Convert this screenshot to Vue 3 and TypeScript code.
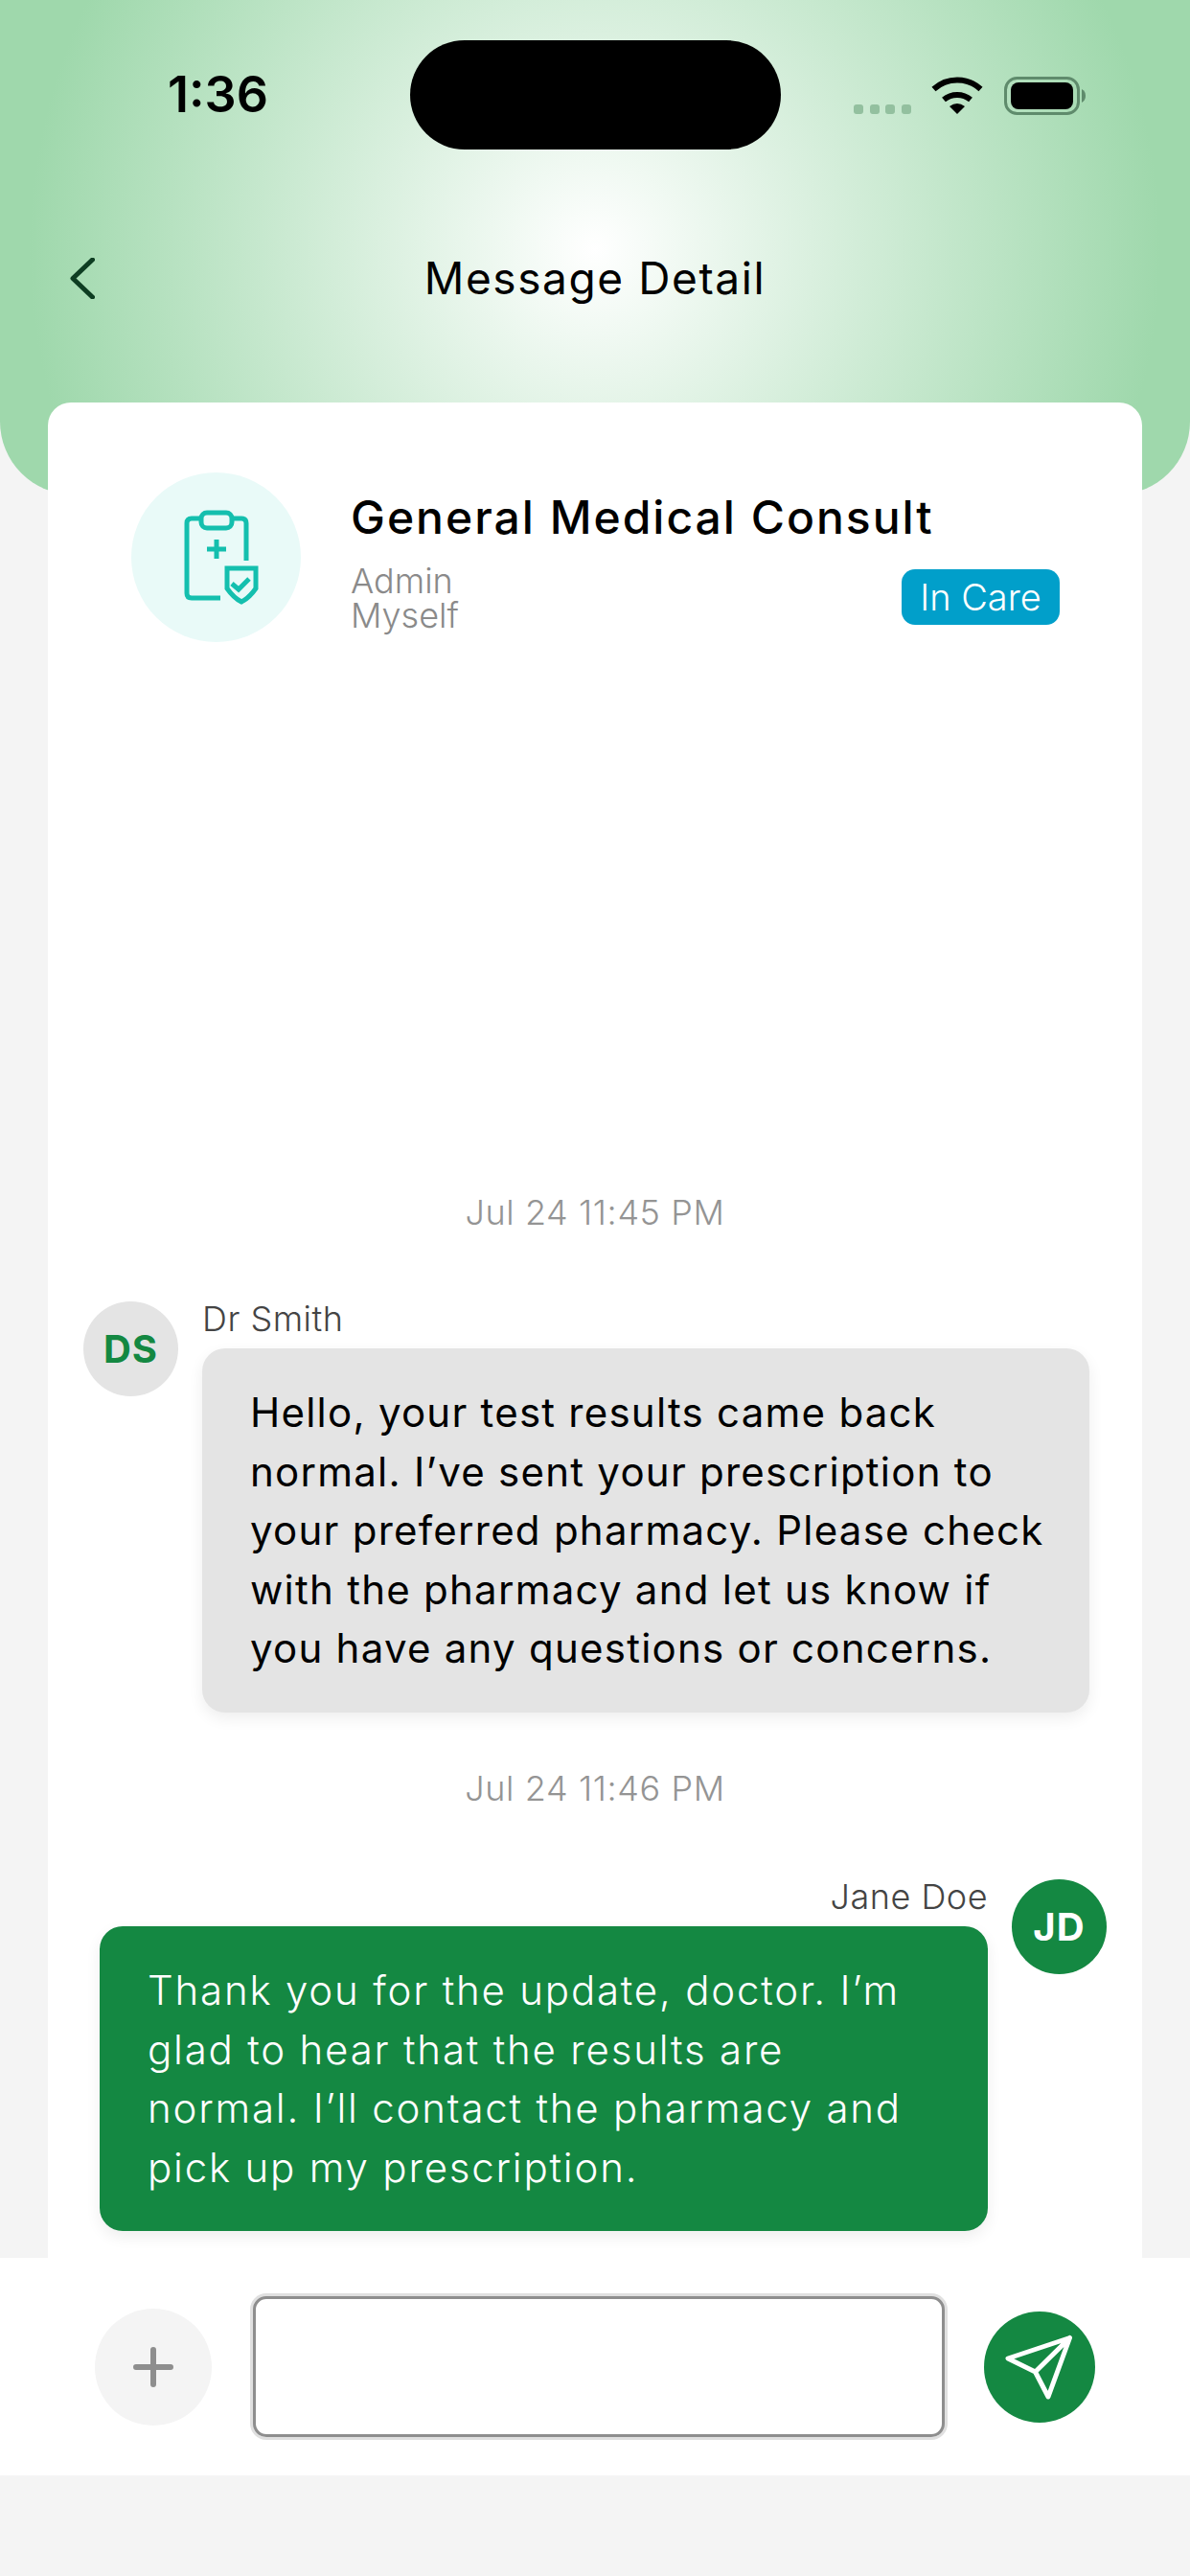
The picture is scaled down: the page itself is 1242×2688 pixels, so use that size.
<script setup lang="ts">
interface Thread {
  time: string
  sender: string
  initials: string
  mine: boolean
  text: string
}

const threads: Thread[] = [
  {
    time: 'Jul 24 11:45 PM',
    sender: 'Dr Smith',
    initials: 'DS',
    mine: false,
    text: "Hello, your test results came back normal. I’ve sent your prescription to your preferred pharmacy. Please check with the pharmacy and let us know if you have any questions or concerns."
  },
  {
    time: 'Jul 24 11:46 PM',
    sender: 'Jane Doe',
    initials: 'JD',
    mine: true,
    text: "Thank you for the update, doctor. I’m glad to hear that the results are normal. I’ll contact the pharmacy and pick up my prescription."
  }
]
</script>

<template>
  <div class="screen">
    <header class="hero">
      <div class="status-bar">
        <span class="clock">1:36</span>
        <div class="island"></div>
        <svg class="status-icons" width="242" height="40" viewBox="0 0 242 40">
          <g fill="#93c09f">
            <rect x="0" y="29" width="10" height="10" rx="3" />
            <rect x="17" y="29" width="10" height="10" rx="3" />
            <rect x="33" y="29" width="10" height="10" rx="3" />
            <rect x="50" y="29" width="10" height="10" rx="3" />
          </g>
          <path d="M83.5 13A36 36 0 0 1 132.500 13M94 24A22 22 0 0 1 122 24" fill="none" stroke="#000" stroke-width="6" />
          <path d="M100 31Q108 25 116 31L108 39Z" fill="#000" />
          <rect x="158.500" y="1.500" width="76" height="37" rx="12" fill="none" stroke="#5f8b6c" stroke-width="3" />
          <rect x="164" y="6" width="65" height="28" rx="8" fill="#000" />
          <path d="M238 13Q242 15 242 20Q242 25 238 27Z" fill="#5f8b6c" />
        </svg>
      </div>
      <nav class="nav">
        <svg class="back" width="26" height="43" viewBox="0 0 26 43">
          <path d="M23.500 2L3 21.500L23.500 41" fill="none" stroke="#0e3d22" stroke-width="5" stroke-linecap="round" stroke-linejoin="round" />
        </svg>
        <h1>Message Detail</h1>
      </nav>
    </header>

    <main class="card">
      <section class="summary">
        <div class="summary-icon">
          <svg width="78" height="100" viewBox="0 0 78 100">
            <g fill="none" stroke="#14bfae" stroke-width="5">
              <path d="M18 9H8Q3 9 3 14V87Q3 92 8 92H38" />
              <path d="M50 9H60Q65 9 65 14V53" />
              <rect x="18" y="3" width="32" height="16" rx="6" />
              <path d="M34 31V51M24 41H44" />
              <path d="M45 61H75V82Q68 92 60 96Q52 92 45 82Z" />
              <path d="M50 77L57 83L68 72" />
            </g>
          </svg>
        </div>
        <div class="summary-text">
          <h2>General Medical Consult</h2>
          <div class="summary-meta">
            <div class="meta-lines">
              <span>Admin</span>
              <span>Myself</span>
            </div>
            <span class="badge">In Care</span>
          </div>
        </div>
      </section>

      <section class="messages">
        <template v-for="item in threads" :key="item.time">
          <div class="stamp">{{ item.time }}</div>
          <div class="row" :class="{ mine: item.mine }">
            <div class="avatar">{{ item.initials }}</div>
            <div class="body">
              <div class="sender">{{ item.sender }}</div>
              <div class="bubble">{{ item.text }}</div>
            </div>
          </div>
        </template>
      </section>
    </main>

    <footer class="composer">
      <button class="add" type="button">
        <svg width="42" height="42" viewBox="0 0 42 42">
          <path d="M21 3V39M3 21H39" fill="none" stroke="#8e8e8e" stroke-width="6" stroke-linecap="round" />
        </svg>
      </button>
      <input class="field" type="text" />
      <button class="send" type="button">
        <svg width="116" height="116" viewBox="0 0 116 116">
          <path d="M89.500 27.500L25 49L53.500 63L67 89ZM89.500 27.500L53.500 63" fill="none" stroke="#fff" stroke-width="5" stroke-linejoin="round" stroke-linecap="round" />
        </svg>
      </button>
    </footer>
    <div class="home-area"></div>
  </div>
</template>

<style scoped>
.screen {
  width: 1242px;
  height: 2688px;
  display: flex;
  flex-direction: column;
  overflow: hidden;
  background: #f4f4f4;
  font-family: Inter, "Liberation Sans", sans-serif;
  color: #000;
}

.hero {
  height: 516px;
  flex: none;
  padding-top: 42px;
  box-sizing: border-box;
  border-radius: 0 0 76px 76px;
  background: radial-gradient(circle 590px at 50% 260px, #fff 0, #9fd8ac 100%);
}

.status-bar {
  display: grid;
  grid-template-columns: 428px 387px 1fr;
  align-items: center;
}

.clock {
  padding-left: 175px;
  font-size: 52px;
  font-weight: 600;
  line-height: 60px;
}

.island {
  height: 114px;
  border-radius: 57px;
  background: #000;
}

.status-icons {
  display: block;
  margin-left: 76px;
  margin-top: 2px;
}

.nav {
  position: relative;
  height: 80px;
  margin-top: 94px;
  display: flex;
  align-items: center;
  justify-content: center;
}

.back {
  position: absolute;
  left: 73px;
  top: 19px;
}

.nav h1 {
  margin: 0;
  font-size: 46px;
  font-weight: 400;
  letter-spacing: 1.6px;
}

.card {
  flex: 1;
  min-height: 0;
  margin: -96px 50px 0;
  position: relative;
  border-radius: 24px 24px 0 0;
  background: #fff;
}

.summary {
  display: flex;
  gap: 52px;
  padding: 73px 86px 0 87px;
}

.summary-icon {
  width: 177px;
  height: 177px;
  flex: none;
  box-sizing: border-box;
  padding-left: 11px;
  display: flex;
  align-items: center;
  justify-content: center;
  border-radius: 50%;
  background: #e9faf8;
}

.summary-text {
  flex: 1;
}

.summary-text h2 {
  margin: 0;
  font-size: 48px;
  font-weight: 500;
  line-height: 58px;
  letter-spacing: 2px;
  padding-top: 18px;
}

.summary-meta {
  display: flex;
  justify-content: space-between;
  align-items: flex-start;
}

.meta-lines {
  display: flex;
  flex-direction: column;
  margin-top: 19px;
  font-size: 36px;
  font-weight: 300;
  line-height: 36px;
  color: #8a8a8a;
}

.badge {
  margin-top: 25px;
  height: 58px;
  width: 165px;
  display: flex;
  align-items: center;
  justify-content: center;
  border-radius: 14px;
  background: #019fca;
  color: #fff;
  font-size: 38px;
  font-weight: 300;
}

.messages {
  padding-top: 573px;
}

.stamp {
  height: 44px;
  line-height: 44px;
  text-align: center;
  font-size: 36px;
  font-weight: 300;
  letter-spacing: 0.6px;
  color: #949494;
}

.row {
  display: flex;
  gap: 25px;
  margin: 71px 55px 57px 37px;
}

.row.mine {
  flex-direction: row-reverse;
  margin: 73px 37px 0 54px;
}

.avatar {
  width: 99px;
  height: 99px;
  flex: none;
  display: flex;
  align-items: center;
  justify-content: center;
  border-radius: 50%;
  background: #e4e4e4;
  color: #148842;
  font-size: 40px;
  font-weight: 700;
  letter-spacing: 1px;
}

.mine .avatar {
  background: #148842;
  color: #fff;
}

.body {
  flex: 1;
  min-width: 0;
}

.sender {
  margin-bottom: 13px;
  font-size: 36px;
  font-weight: 300;
  line-height: 36px;
  letter-spacing: 0.5px;
  color: #444;
}

.mine .sender {
  text-align: right;
}

.bubble {
  padding: 36px 42px 36px 50px;
  border-radius: 24px;
  background: #e4e4e4;
  box-shadow: 0 6px 16px rgba(0, 0, 0, 0.07);
  font-size: 42px;
  line-height: 61.6px;
  letter-spacing: 1.25px;
  color: #000;
}

.mine .bubble {
  padding-right: 50px;
  background: #148842;
  color: #fff;
  font-weight: 300;
  letter-spacing: 1.8px;
}

.composer {
  height: 227px;
  flex: none;
  position: relative;
  display: flex;
  align-items: center;
  padding-left: 99px;
  box-sizing: border-box;
  background: #fff;
}

.add {
  width: 122px;
  height: 122px;
  flex: none;
  padding: 0;
  display: flex;
  align-items: center;
  justify-content: center;
  border: none;
  border-radius: 50%;
  background: #f4f4f4;
}

.field {
  width: 722px;
  height: 147px;
  flex: none;
  margin: 0 41px 0 43px;
  padding: 0;
  box-sizing: border-box;
  border: 3px solid #8e8e8e;
  border-radius: 14px;
  outline: none;
  background: #fff;
  box-shadow: 0 0 0 3px #e0e0e0;
}

.send {
  width: 116px;
  height: 116px;
  flex: none;
  padding: 0;
  border: none;
  border-radius: 50%;
  background: #148842;
}

.send svg {
  display: block;
}

.home-area {
  height: 105px;
  flex: none;
}
</style>
